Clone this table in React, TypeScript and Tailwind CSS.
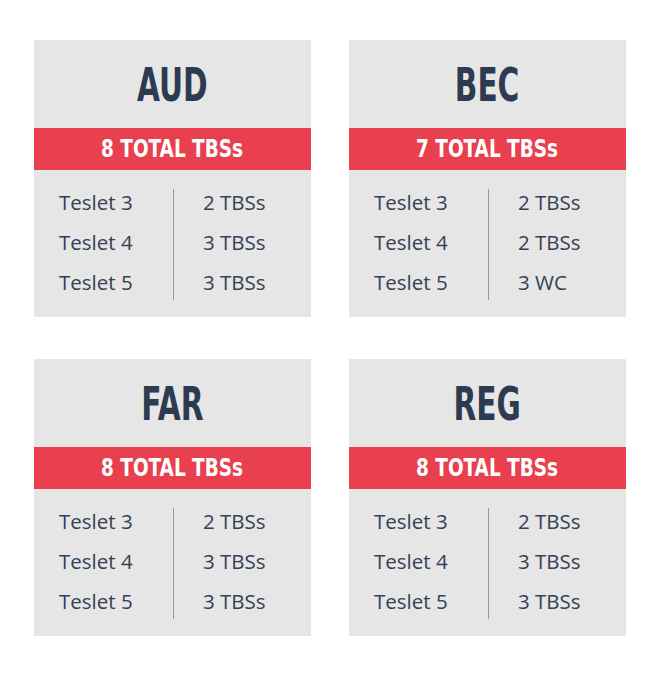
const cards = [
  {
    code: "AUD",
    total: "8 TOTAL TBSs",
    rows: [
      ["Teslet 3", "2 TBSs"],
      ["Teslet 4", "3 TBSs"],
      ["Teslet 5", "3 TBSs"],
    ],
  },
  {
    code: "BEC",
    total: "7 TOTAL TBSs",
    rows: [
      ["Teslet 3", "2 TBSs"],
      ["Teslet 4", "2 TBSs"],
      ["Teslet 5", "3 WC"],
    ],
  },
  {
    code: "FAR",
    total: "8 TOTAL TBSs",
    rows: [
      ["Teslet 3", "2 TBSs"],
      ["Teslet 4", "3 TBSs"],
      ["Teslet 5", "3 TBSs"],
    ],
  },
  {
    code: "REG",
    total: "8 TOTAL TBSs",
    rows: [
      ["Teslet 3", "2 TBSs"],
      ["Teslet 4", "3 TBSs"],
      ["Teslet 5", "3 TBSs"],
    ],
  },
];

const narrow = "font-['DejaVu_Sans_Condensed','DejaVu_Sans',sans-serif]";

function ExamCard({ code, total, rows }: (typeof cards)[number]) {
  return (
    <div className="flex h-[277px] w-[277px] flex-col bg-[#e6e6e6]">
      <div className="flex h-[88px] items-center justify-center">
        <span
          className={`${narrow} inline-block scale-x-[0.7] text-[47px] font-bold leading-none text-[#2d3b50]`}
        >
          {code}
        </span>
      </div>
      <div className="flex h-[42px] items-center justify-center bg-[#e8404e]">
        <span
          className={`${narrow} inline-block scale-x-[0.855] text-[24px] font-bold text-white`}
        >
          {total}
        </span>
      </div>
      <div className="flex pt-[12px] font-['Open_Sans',sans-serif] text-[20.5px] text-[#344155]">
        <div className="w-[139px] pl-[25px]">
          {rows.map(([left]) => (
            <div className="h-10 leading-10" key={left}>
              {left}
            </div>
          ))}
        </div>
        <div className="mt-[7px] h-[111px] w-px bg-[#9a9a9a]" />
        <div className="pl-[29px]">
          {rows.map(([left, right]) => (
            <div className="h-10 leading-10" key={left}>
              {right}
            </div>
          ))}
        </div>
      </div>
    </div>
  );
}

export default function App() {
  return (
    <div className="min-h-[679px] bg-white pl-[34px] pt-[40px]">
      <div className="grid w-fit grid-cols-[277px_277px] gap-x-[38px] gap-y-[42px]">
        {cards.map((card) => (
          <ExamCard key={card.code} {...card} />
        ))}
      </div>
    </div>
  );
}
